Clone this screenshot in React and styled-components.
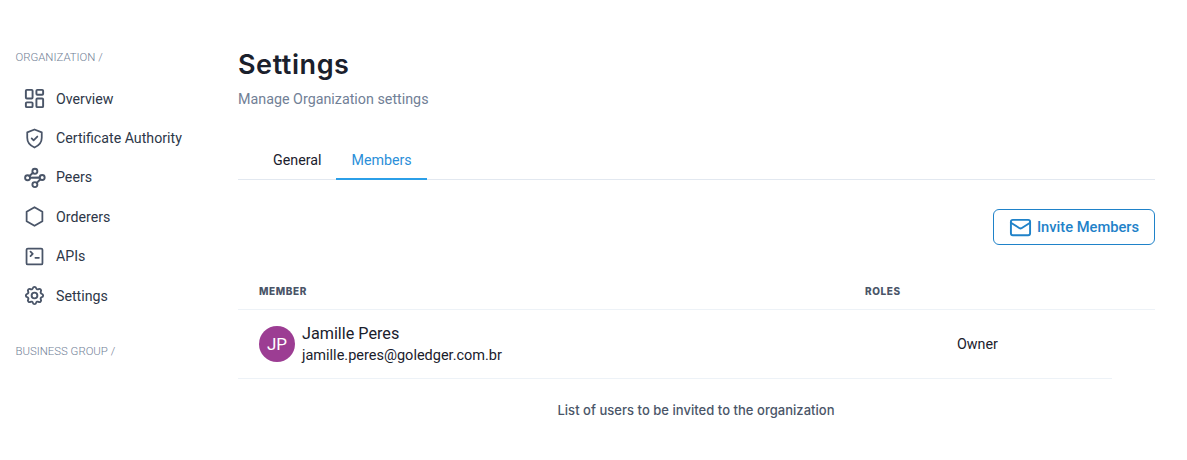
import React from 'react';
import styled, { createGlobalStyle } from 'styled-components';
import { LayoutDashboard, Mail } from 'lucide-react';
import { HiOutlineCog } from 'react-icons/hi';

const GlobalStyle = createGlobalStyle`
  html, body {
    margin: 0;
    padding: 0;
    background: #ffffff;
    font-family: Roboto, "Liberation Sans", sans-serif;
  }
`;

const Page = styled.div`
  display: flex;
  width: 1187px;
  height: 460px;
  overflow: hidden;
`;

const Sidebar = styled.aside`
  width: 238px;
  flex-shrink: 0;
  padding-top: 50px;
  box-sizing: border-box;
`;

const GroupLabel = styled.div`
  margin-left: 15.5px;
  font-size: 11.4px;
  font-weight: 300;
  line-height: 14px;
  color: #718096;
`;

const NavList = styled.nav`
  display: flex;
  flex-direction: column;
  margin: 15px 0 29px 23px;
`;

const NavItem = styled.a`
  display: flex;
  align-items: center;
  gap: 10px;
  height: 39.4px;
  font-size: 14.2px;
  color: #2d3748;

  svg {
    width: 23px;
    height: 23px;
    color: #4a5568;
    flex-shrink: 0;
  }
`;

const Main = styled.main`
  width: 917px;
  padding-top: 45px;
`;

const Title = styled.h1`
  margin: 0;
  font-family: Inter, sans-serif;
  font-size: 27px;
  font-weight: 600;
  letter-spacing: 0.55px;
  line-height: 40px;
  color: #1a202c;
`;

const Subtitle = styled.p`
  margin: 4px 0 0;
  font-size: 14.3px;
  line-height: 20px;
  color: #718096;
`;

const Tabs = styled.div`
  display: flex;
  margin-top: 26px;
  padding-left: 20px;
  height: 44px;
  border-bottom: 1px solid #e2e8f0;
`;

const Tab = styled.div`
  padding: 6px 15px 0;
  margin-bottom: -1px;
  display: flex;
  align-items: center;
  font-size: 14.25px;
  color: ${(p) => (p.$active ? '#2b8fd9' : '#1a202c')};
  border-bottom: 2px solid ${(p) => (p.$active ? '#2b9fe8' : 'transparent')};
  box-sizing: border-box;
`;

const Toolbar = styled.div`
  display: flex;
  justify-content: flex-end;
  margin-top: 29px;
`;

const InviteButton = styled.button`
  display: flex;
  align-items: center;
  justify-content: center;
  gap: 5px;
  width: 162px;
  height: 36px;
  padding: 0;
  background: #ffffff;
  border: 1px solid #1f82c9;
  border-radius: 6px;
  font-family: inherit;
  font-size: 14.7px;
  font-weight: 500;
  color: #1f82c9;

  svg {
    width: 23px;
    height: 23px;
  }
`;

const HeadRow = styled.div`
  display: grid;
  grid-template-columns: 606px 1fr;
  margin-top: 28px;
  height: 35px;
  padding-bottom: 1px;
  align-items: center;
  border-bottom: 1px solid #edf2f7;
`;

const HeadCell = styled.div`
  padding-left: 21px;
  font-family: Inter, sans-serif;
  font-size: 10px;
  font-weight: 800;
  letter-spacing: 0.6px;
  color: #4a5568;
`;

const MemberRow = styled.div`
  display: grid;
  grid-template-columns: 719px 1fr;
  width: 874px;
  height: 68px;
  align-items: center;
  border-bottom: 1px solid #edf2f7;
`;

const MemberCell = styled.div`
  display: flex;
  align-items: center;
  gap: 7px;
  padding-left: 21px;
`;

const Avatar = styled.div`
  width: 36px;
  height: 36px;
  border-radius: 50%;
  background: #9c3d93;
  color: #ffffff;
  display: flex;
  align-items: center;
  justify-content: center;
  font-size: 17px;
`;

const MemberText = styled.div`
  padding-top: 2px;
`;

const MemberName = styled.div`
  font-size: 16.2px;
  line-height: 22px;
  color: #1a202c;
`;

const MemberEmail = styled.div`
  font-size: 14.5px;
  line-height: 22px;
  color: #1a202c;
`;

const RoleCell = styled.div`
  font-size: 14.3px;
  color: #1a202c;
`;

const Caption = styled.div`
  width: 916px;
  margin-top: 23px;
  text-align: center;
  font-family: Inter, sans-serif;
  font-size: 13px;
  font-weight: 500;
  letter-spacing: 0.03px;
  color: #4a5568;
`;

const IconSvg = styled.svg.attrs((p) => ({
  viewBox: p.$box || '0 0 24 24',
  fill: 'none',
  stroke: 'currentColor',
  strokeWidth: 2,
  strokeLinecap: 'round',
  strokeLinejoin: 'round',
}))``;

const ShieldIcon = () => (
  <IconSvg $box="-1 -1 26 26">
    <path d="M12 1.8 20.2 5v6.2c0 4.9-3.3 8.9-8.2 11-4.9-2.1-8.2-6.1-8.2-11V5z" />
    <path d="m8.8 11.8 2.2 2.2 4.2-4.2" />
  </IconSvg>
);

const PeersIcon = () => (
  <IconSvg>
    <circle cx="12.4" cy="5.4" r="2.6" />
    <circle cx="4.8" cy="12.2" r="2.6" />
    <circle cx="20" cy="12" r="2.6" />
    <circle cx="12.4" cy="19.4" r="2.6" />
    <path d="M7.4 12.2 17.4 12M10.4 7.1 6.8 10.5M18.1 13.8 14.4 17.6" />
  </IconSvg>
);

const HexagonIcon = () => (
  <IconSvg $box="-1 -1 26 26">
    <path d="M12 1.5 20.9 6.7v10.6L12 22.5l-8.9-5.2V6.7z" />
  </IconSvg>
);

const TerminalIcon = () => (
  <IconSvg $box="-1 -1 26 26">
    <rect x="3" y="3" width="18" height="18" rx="1.5" />
    <path d="M7.5 6.5 10 9l-2.5 2.5M13 13.5h4" />
  </IconSvg>
);

const navItems = [
  { label: 'Overview', icon: <LayoutDashboard /> },
  { label: 'Certificate Authority', icon: <ShieldIcon /> },
  { label: 'Peers', icon: <PeersIcon /> },
  { label: 'Orderers', icon: <HexagonIcon /> },
  { label: 'APIs', icon: <TerminalIcon /> },
  { label: 'Settings', icon: <HiOutlineCog /> },
];

const App = () => (
  <Page>
    <GlobalStyle />
    <Sidebar>
      <GroupLabel>ORGANIZATION /</GroupLabel>
      <NavList>
        {navItems.map((item) => (
          <NavItem key={item.label}>
            {item.icon}
            {item.label}
          </NavItem>
        ))}
      </NavList>
      <GroupLabel>BUSINESS GROUP /</GroupLabel>
    </Sidebar>
    <Main>
      <Title>Settings</Title>
      <Subtitle>Manage Organization settings</Subtitle>
      <Tabs>
        <Tab>General</Tab>
        <Tab $active>Members</Tab>
      </Tabs>
      <Toolbar>
        <InviteButton>
          <Mail />
          Invite Members
        </InviteButton>
      </Toolbar>
      <HeadRow>
        <HeadCell>MEMBER</HeadCell>
        <HeadCell>ROLES</HeadCell>
      </HeadRow>
      <MemberRow>
        <MemberCell>
          <Avatar>JP</Avatar>
          <MemberText>
            <MemberName>Jamille Peres</MemberName>
            <MemberEmail>jamille.peres@goledger.com.br</MemberEmail>
          </MemberText>
        </MemberCell>
        <RoleCell>Owner</RoleCell>
      </MemberRow>
      <Caption>List of users to be invited to the organization</Caption>
    </Main>
  </Page>
);

export default App;
